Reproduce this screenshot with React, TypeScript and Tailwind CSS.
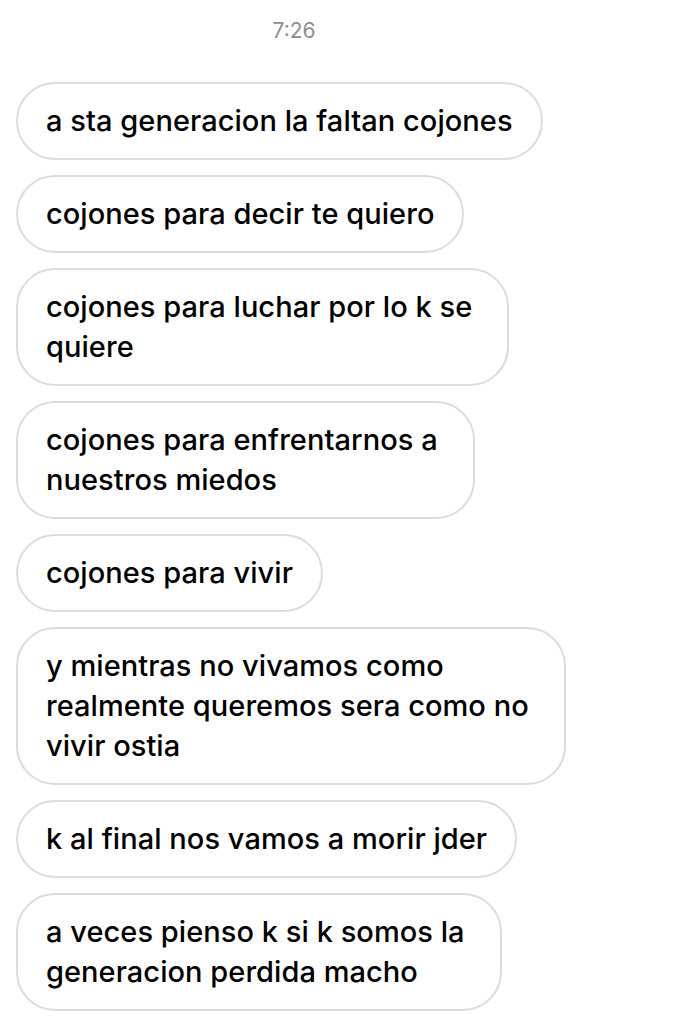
import React from "react";

const messages: string[][] = [
  ["a sta generacion la faltan cojones"],
  ["cojones para decir te quiero"],
  ["cojones para luchar por lo k se", "quiere"],
  ["cojones para enfrentarnos a", "nuestros miedos"],
  ["cojones para vivir"],
  ["y mientras no vivamos como", "realmente queremos sera como no", "vivir ostia"],
  ["k al final nos vamos a morir jder"],
  ["a veces pienso k si k somos la", "generacion perdida macho"],
];

export default function App() {
  return (
    <div
      className="w-[680px] h-[1024px] bg-white overflow-hidden"
      style={{ fontFamily: "Inter, 'Noto Sans', sans-serif" }}
    >
      <div className="w-[588px] pt-[18px] text-center text-[21px] leading-[26px] text-[#8e8e8e]">
        7:26
      </div>
      <div className="flex flex-col items-start gap-[15px] pl-[16px] pt-[38px]">
        {messages.map((lines, i) => (
          <div
            key={i}
            className={
              lines.length > 1
                ? "flex flex-col rounded-[39px] border-2 border-[#dcdcdc] pl-[28px] pr-[35px] py-[17px] text-[29px] leading-[40px] font-medium text-black tracking-[0.05px]"
                : "flex flex-col rounded-[39px] border-2 border-[#dcdcdc] px-[28px] py-[17px] text-[29px] leading-[40px] font-medium text-black tracking-[0.05px]"
            }
          >
            {lines.map((l, j) => (
              <span key={j} className="whitespace-nowrap">
                {l}
              </span>
            ))}
          </div>
        ))}
      </div>
    </div>
  );
}
